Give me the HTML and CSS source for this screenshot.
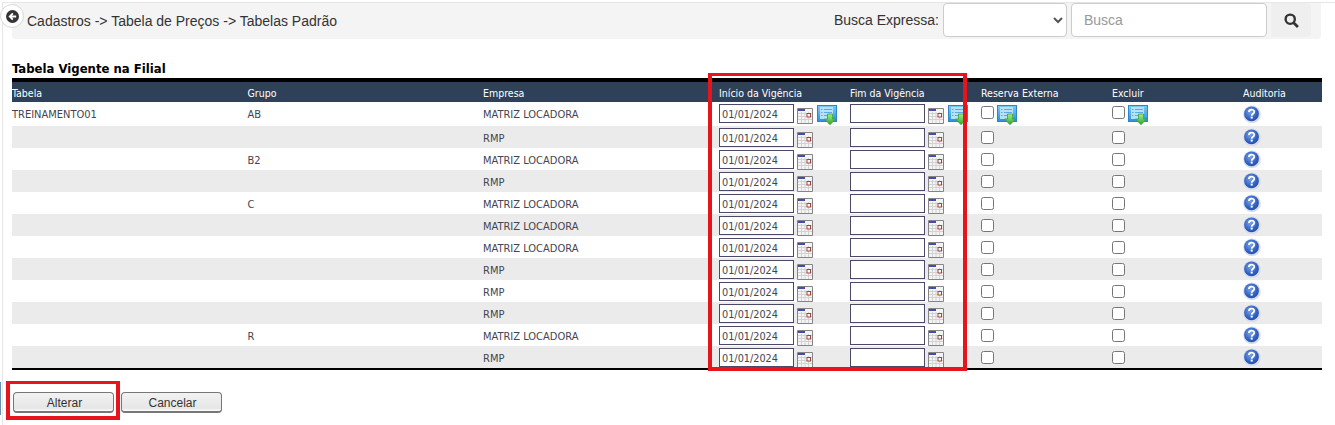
FILE: index.html
```html
<!DOCTYPE html>
<html lang="pt-BR">
<head>
<meta charset="utf-8">
<title>Tabelas Padrão</title>
<link rel="stylesheet" href="styles.css">
</head>
<body>
<svg class="defs" width="0" height="0" aria-hidden="true">
  <defs>
    <linearGradient id="gBlue" x1="0" y1="0" x2="0" y2="1"><stop offset="0" stop-color="#7ccdf5"/><stop offset="1" stop-color="#2b8fdc"/></linearGradient>
    <linearGradient id="gGreen" x1="0" y1="0" x2="0" y2="1"><stop offset="0" stop-color="#a6ec8c"/><stop offset="1" stop-color="#2da52d"/></linearGradient>
    <radialGradient id="gHelp" cx="0.42" cy="0.38" r="0.62"><stop offset="0" stop-color="#7ba3ea"/><stop offset="0.75" stop-color="#2f5fbe"/><stop offset="1" stop-color="#2a52a8"/></radialGradient>
  </defs>
  <symbol id="cal" viewBox="0 0 16 16">
    <rect x="0" y="0" width="16" height="16" fill="#f4f4f4"/>
    <path d="M0.5 0.5H15.5V15.5H0.5Z" fill="none" stroke="#858585"/>
    <path d="M1 5.5H15M1 8.5H15M1 11.5H15M4.5 4V15M8 4V15M11.5 4V15" stroke="#d2d2d2"/>
    <rect x="1" y="1" width="7" height="2" fill="#4a4aa8"/>
    <rect x="10" y="5.5" width="3.5" height="3.5" fill="#fff" stroke="#a84040"/>
  </symbol>
  <symbol id="exp" viewBox="0 0 20 20">
    <rect x="0" y="0" width="20" height="17" fill="url(#gBlue)"/>
    <rect x="0.5" y="0.5" width="19" height="16" fill="none" stroke="#2a86cf"/>
    <rect x="3" y="2" width="13" height="12" fill="#b6e2f9"/>
    <path d="M4 4.5H5.5M7 4.5H15M4 7.5H5.5M7 7.5H15M4 10.5H5.5M7 10.5H11" stroke="#5aaae4"/>
    <path d="M10.5 9H15.5V14H18.5L13 19.7L7.5 14H10.5Z" fill="url(#gGreen)" stroke="#2a9a2a" stroke-width="0.7"/>
  </symbol>
  <symbol id="help" viewBox="0 0 18 18">
    <circle cx="9" cy="9.4" r="8.8" fill="#d5dcea"/>
    <circle cx="8.5" cy="8.8" r="7.4" fill="url(#gHelp)"/>
    <path d="M5.9 7C5.9 3.8 11.3 3.8 11.3 6.8C11.3 8.9 8.7 8.7 8.7 10.8" fill="none" stroke="#fff" stroke-width="1.8"/>
    <rect x="7.7" y="11.6" width="2" height="2" fill="#fff"/>
  </symbol>
</svg>

<div class="page">
  <span class="edge"></span>
  <button class="back" type="button" aria-label="Voltar">
    <svg width="13" height="13" viewBox="0 0 16 16"><circle cx="8" cy="8" r="8" fill="#333"/><path d="M12.5 8H5M8.4 4.2L4.6 8L8.4 11.8" fill="none" stroke="#fff" stroke-width="2.2"/></svg>
  </button>

  <header class="topbar">
    <div class="crumbs">Cadastros -&gt; Tabela de Preços -&gt; Tabelas Padrão</div>
    <div class="search">
      <label class="search-label">Busca Expressa:</label>
      <select class="search-select"><option></option></select>
      <input class="search-input" type="text" placeholder="Busca">
      <button class="search-btn" type="button" aria-label="Buscar">
        <svg width="15" height="15" viewBox="0 0 14 14"><circle cx="5.8" cy="5.8" r="4.3" fill="none" stroke="#333" stroke-width="2.2"/><path d="M9 9L13 13" stroke="#333" stroke-width="2.6"/></svg>
      </button>
    </div>
  </header>

  <h2 class="title">Tabela Vigente na Filial</h2>

  <table class="grid">
    <colgroup>
      <col class="c-name"><col class="c-name"><col class="c-name2">
      <col class="c-mid"><col class="c-mid"><col class="c-mid"><col class="c-mid"><col class="c-last">
    </colgroup>
    <thead>
      <tr><th>Tabela</th><th>Grupo</th><th>Empresa</th><th>Início da Vigência</th><th>Fim da Vigência</th><th>Reserva Externa</th><th>Excluir</th><th>Auditoria</th></tr>
    </thead>
    <tbody>
      <tr class="first">
        <td>TREINAMENTO01</td><td>AB</td><td>MATRIZ LOCADORA</td>
        <td><div class="cell"><input class="date" value="01/01/2024"><svg class="cal"><use href="#cal"/></svg><svg class="exp"><use href="#exp"/></svg></div></td>
        <td><div class="cell"><input class="date"><svg class="cal"><use href="#cal"/></svg><svg class="exp"><use href="#exp"/></svg></div></td>
        <td><div class="cell"><input class="chk chk-top" type="checkbox"><svg class="exp exp-chk"><use href="#exp"/></svg></div></td>
        <td><div class="cell"><input class="chk chk-top" type="checkbox"><svg class="exp exp-chk"><use href="#exp"/></svg></div></td>
        <td><svg class="help"><use href="#help"/></svg></td>
      </tr>
      <tr>
        <td></td><td></td><td>RMP</td>
        <td><div class="cell"><input class="date" value="01/01/2024"><svg class="cal"><use href="#cal"/></svg></div></td>
        <td><div class="cell"><input class="date"><svg class="cal"><use href="#cal"/></svg></div></td>
        <td><input class="chk" type="checkbox"></td><td><input class="chk" type="checkbox"></td>
        <td><svg class="help"><use href="#help"/></svg></td>
      </tr>
      <tr>
        <td></td><td>B2</td><td>MATRIZ LOCADORA</td>
        <td><div class="cell"><input class="date" value="01/01/2024"><svg class="cal"><use href="#cal"/></svg></div></td>
        <td><div class="cell"><input class="date"><svg class="cal"><use href="#cal"/></svg></div></td>
        <td><input class="chk" type="checkbox"></td><td><input class="chk" type="checkbox"></td>
        <td><svg class="help"><use href="#help"/></svg></td>
      </tr>
      <tr>
        <td></td><td></td><td>RMP</td>
        <td><div class="cell"><input class="date" value="01/01/2024"><svg class="cal"><use href="#cal"/></svg></div></td>
        <td><div class="cell"><input class="date"><svg class="cal"><use href="#cal"/></svg></div></td>
        <td><input class="chk" type="checkbox"></td><td><input class="chk" type="checkbox"></td>
        <td><svg class="help"><use href="#help"/></svg></td>
      </tr>
      <tr>
        <td></td><td>C</td><td>MATRIZ LOCADORA</td>
        <td><div class="cell"><input class="date" value="01/01/2024"><svg class="cal"><use href="#cal"/></svg></div></td>
        <td><div class="cell"><input class="date"><svg class="cal"><use href="#cal"/></svg></div></td>
        <td><input class="chk" type="checkbox"></td><td><input class="chk" type="checkbox"></td>
        <td><svg class="help"><use href="#help"/></svg></td>
      </tr>
      <tr>
        <td></td><td></td><td>MATRIZ LOCADORA</td>
        <td><div class="cell"><input class="date" value="01/01/2024"><svg class="cal"><use href="#cal"/></svg></div></td>
        <td><div class="cell"><input class="date"><svg class="cal"><use href="#cal"/></svg></div></td>
        <td><input class="chk" type="checkbox"></td><td><input class="chk" type="checkbox"></td>
        <td><svg class="help"><use href="#help"/></svg></td>
      </tr>
      <tr>
        <td></td><td></td><td>MATRIZ LOCADORA</td>
        <td><div class="cell"><input class="date" value="01/01/2024"><svg class="cal"><use href="#cal"/></svg></div></td>
        <td><div class="cell"><input class="date"><svg class="cal"><use href="#cal"/></svg></div></td>
        <td><input class="chk" type="checkbox"></td><td><input class="chk" type="checkbox"></td>
        <td><svg class="help"><use href="#help"/></svg></td>
      </tr>
      <tr>
        <td></td><td></td><td>RMP</td>
        <td><div class="cell"><input class="date" value="01/01/2024"><svg class="cal"><use href="#cal"/></svg></div></td>
        <td><div class="cell"><input class="date"><svg class="cal"><use href="#cal"/></svg></div></td>
        <td><input class="chk" type="checkbox"></td><td><input class="chk" type="checkbox"></td>
        <td><svg class="help"><use href="#help"/></svg></td>
      </tr>
      <tr>
        <td></td><td></td><td>RMP</td>
        <td><div class="cell"><input class="date" value="01/01/2024"><svg class="cal"><use href="#cal"/></svg></div></td>
        <td><div class="cell"><input class="date"><svg class="cal"><use href="#cal"/></svg></div></td>
        <td><input class="chk" type="checkbox"></td><td><input class="chk" type="checkbox"></td>
        <td><svg class="help"><use href="#help"/></svg></td>
      </tr>
      <tr>
        <td></td><td></td><td>RMP</td>
        <td><div class="cell"><input class="date" value="01/01/2024"><svg class="cal"><use href="#cal"/></svg></div></td>
        <td><div class="cell"><input class="date"><svg class="cal"><use href="#cal"/></svg></div></td>
        <td><input class="chk" type="checkbox"></td><td><input class="chk" type="checkbox"></td>
        <td><svg class="help"><use href="#help"/></svg></td>
      </tr>
      <tr>
        <td></td><td>R</td><td>MATRIZ LOCADORA</td>
        <td><div class="cell"><input class="date" value="01/01/2024"><svg class="cal"><use href="#cal"/></svg></div></td>
        <td><div class="cell"><input class="date"><svg class="cal"><use href="#cal"/></svg></div></td>
        <td><input class="chk" type="checkbox"></td><td><input class="chk" type="checkbox"></td>
        <td><svg class="help"><use href="#help"/></svg></td>
      </tr>
      <tr>
        <td></td><td></td><td>RMP</td>
        <td><div class="cell"><input class="date" value="01/01/2024"><svg class="cal"><use href="#cal"/></svg></div></td>
        <td><div class="cell"><input class="date"><svg class="cal"><use href="#cal"/></svg></div></td>
        <td><input class="chk" type="checkbox"></td><td><input class="chk" type="checkbox"></td>
        <td><svg class="help"><use href="#help"/></svg></td>
      </tr>
    </tbody>
  </table>

  <div class="actions">
    <button class="btn" type="button">Alterar</button>
    <button class="btn" type="button">Cancelar</button>
  </div>

  <div class="mark mark-dates"></div>
  <div class="mark mark-save"></div>
</div>
</body>
</html>
```

FILE: styles.css
```css
* { box-sizing: border-box; }
html, body { margin: 0; padding: 0; background: #fff; overflow: hidden; }
body { width: 1335px; height: 425px; font-family: "Liberation Sans", Arial, sans-serif; }
.defs { position: absolute; }

.page {
  position: relative;
  height: 425px;
  margin-left: 2px;
  margin-top: 2px;
  padding: 0 0 0 9px;
  border-top: 1px solid #e6e6e6;
  border-left: 1px solid #e6e6e6;
}

.edge {
  position: absolute;
  left: -3px;
  top: 379px;
  width: 1px;
  height: 33px;
  background: #6a8fa8;
}

.back {
  position: absolute;
  left: -3px;
  top: 1px;
  width: 24px;
  height: 24px;
  padding: 0;
  display: flex;
  align-items: center;
  justify-content: center;
  background: #fff;
  border: 1px solid #d8d8d8;
  border-radius: 50%;
}

.topbar {
  width: 1309px;
  height: 36px;
  background: #f4f4f4;
  border-radius: 0 0 4px 4px;
  display: flex;
  justify-content: space-between;
  align-items: flex-start;
}
.crumbs { margin: 9px 0 0 15px; font-size: 14px; line-height: 18px; color: #333; }
.search { display: flex; align-items: flex-start; margin-right: 10px; }
.search-label { margin: 8px 4px 0 0; font-size: 14px; line-height: 18px; color: #333; }
.search-select {
  width: 124px; height: 34px; background: #fff;
  border: 1px solid #ccc; border-radius: 4px;
  margin-right: 4px; font-size: 14px; color: #555;
}
.search-input {
  width: 196px; height: 34px; background: #fff;
  border: 1px solid #ccc; border-radius: 4px;
  padding: 0 12px; font: 14px "Liberation Sans", Arial, sans-serif;
  margin-right: 4px;
}
.search-input::placeholder { color: #999; }
.search-btn {
  width: 40px; height: 34px; padding: 0;
  display: flex; align-items: center; justify-content: center;
  background: #efefef; border: 0; border-radius: 4px;
}

.title {
  margin: 22px 0 0;
  font: bold 13px/16px "DejaVu Sans Condensed", "DejaVu Sans", sans-serif;
  color: #000;
}

.grid {
  width: 1310px;
  margin-top: 1px;
  border-collapse: separate;
  border-spacing: 0;
  table-layout: fixed;
  border-top: 4px solid #000;
  border-bottom: 2px solid #000;
  font: 11px "DejaVu Sans Condensed", "DejaVu Sans", sans-serif;
}
.c-name { width: 235.5px; }
.c-name2 { width: 236px; }
.c-mid { width: 131px; }
.c-last { width: 79px; }

.grid th {
  height: 20px;
  padding: 1px 0 0;
  text-align: left;
  font-size: 10.5px;
  font-weight: normal;
  color: #fff;
  background: #2f4159;
}
.grid td { height: 22px; padding: 1px 0 0; color: #444450; vertical-align: middle; }
.grid tr:not(.first) td:nth-child(-n+3) { padding-top: 3px; }
.grid td:last-child { padding-top: 0; }
.grid tr.first td { height: 24px; }
.grid tbody tr:nth-child(even) td { background: #ebebeb; }

.cell { display: flex; align-items: flex-start; }
.date {
  width: 75px; height: 19px; padding: 2px 2px 0;
  border: 1px solid #4a4a68;
  background: #fff; color: #444450;
  font: 10.8px "DejaVu Sans Condensed", "DejaVu Sans", sans-serif;
  border-radius: 0; margin: 0;
}
.cal { display: block; width: 16px; height: 16px; margin: 4px 0 0 3px; flex: none; }
.exp { display: block; width: 20px; height: 20px; margin: 1px 0 0 4px; flex: none; }
.exp-chk { margin: 1px 0 0 3px; }
.chk { display: block; width: 13px; height: 13px; margin: 0; }
.chk-top { margin-top: 2px; }
.help { display: block; width: 18px; height: 18px; }

.actions { display: flex; gap: 7px; margin: 22px 0 0 1px; }
.btn {
  width: 101px; height: 21px; padding: 1px 0 0 2px;
  font: 12px "Liberation Sans", Arial, sans-serif;
  color: #333;
  background: linear-gradient(#f2f2f2, #e6e6e6 85%, #fff);
  border: 1px solid #777;
  border-bottom-width: 2px;
  border-radius: 4px;
}

.mark { position: absolute; border: 4px solid #e8141c; border-top-width: 3px; pointer-events: none; }
.mark-dates { left: 705px; top: 70px; width: 259px; height: 298px; }
.mark-save { left: 3px; top: 378px; width: 114px; height: 39px; }
```
